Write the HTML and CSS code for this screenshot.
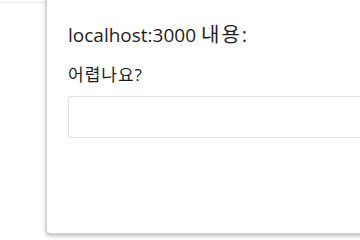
FILE: index.html
```html
<!DOCTYPE html>
<html lang="ko">
<head>
<meta charset="utf-8">
<link rel="stylesheet" href="styles.css">
</head>
<body>
<div class="page">
  <div class="page-bar"></div>
</div>
<div class="dialog">
  <div class="dialog-title">localhost:3000 <span class="ko">내용:</span></div>
  <div class="dialog-message">어렵나요?</div>
  <input class="dialog-input" type="text">
</div>
</body>
</html>
```

FILE: styles.css
```css
html, body {
  margin: 0;
  padding: 0;
  width: 360px;
  height: 240px;
  overflow: hidden;
  background: #ffffff;
  font-family: "Open Sans", "Noto Sans CJK KR", sans-serif;
}

.page {
  width: 46px;
}

.page-bar {
  height: 2px;
  border-bottom: 1px solid #e8e8e8;
}

.dialog {
  position: absolute;
  left: 46px;
  top: -6px;
  width: 420px;
  height: 240px;
  box-sizing: border-box;
  background: #ffffff;
  border: 1px solid #d4d4d4;
  border-radius: 4px;
  box-shadow: 0 2px 4px rgba(0, 0, 0, 0.25), 0 0 2px rgba(0, 0, 0, 0.1);
  padding: 27px 0 0 21px;
}

.dialog-title {
  font-size: 19px;
  line-height: 26px;
  height: 26px;
  color: #1e1e1e;
}

.dialog-title .ko {
  font-size: 20px;
  letter-spacing: 2px;
}

.dialog-message {
  font-size: 17px;
  line-height: 22px;
  height: 22px;
  letter-spacing: 1px;
  color: #1e1e1e;
  margin-top: 16px;
}

.dialog-input {
  display: block;
  margin-top: 10px;
  width: 360px;
  height: 42px;
  box-sizing: border-box;
  border: 1px solid #e2e2e2;
  border-radius: 2px;
  outline: none;
  background: #ffffff;
}
```
